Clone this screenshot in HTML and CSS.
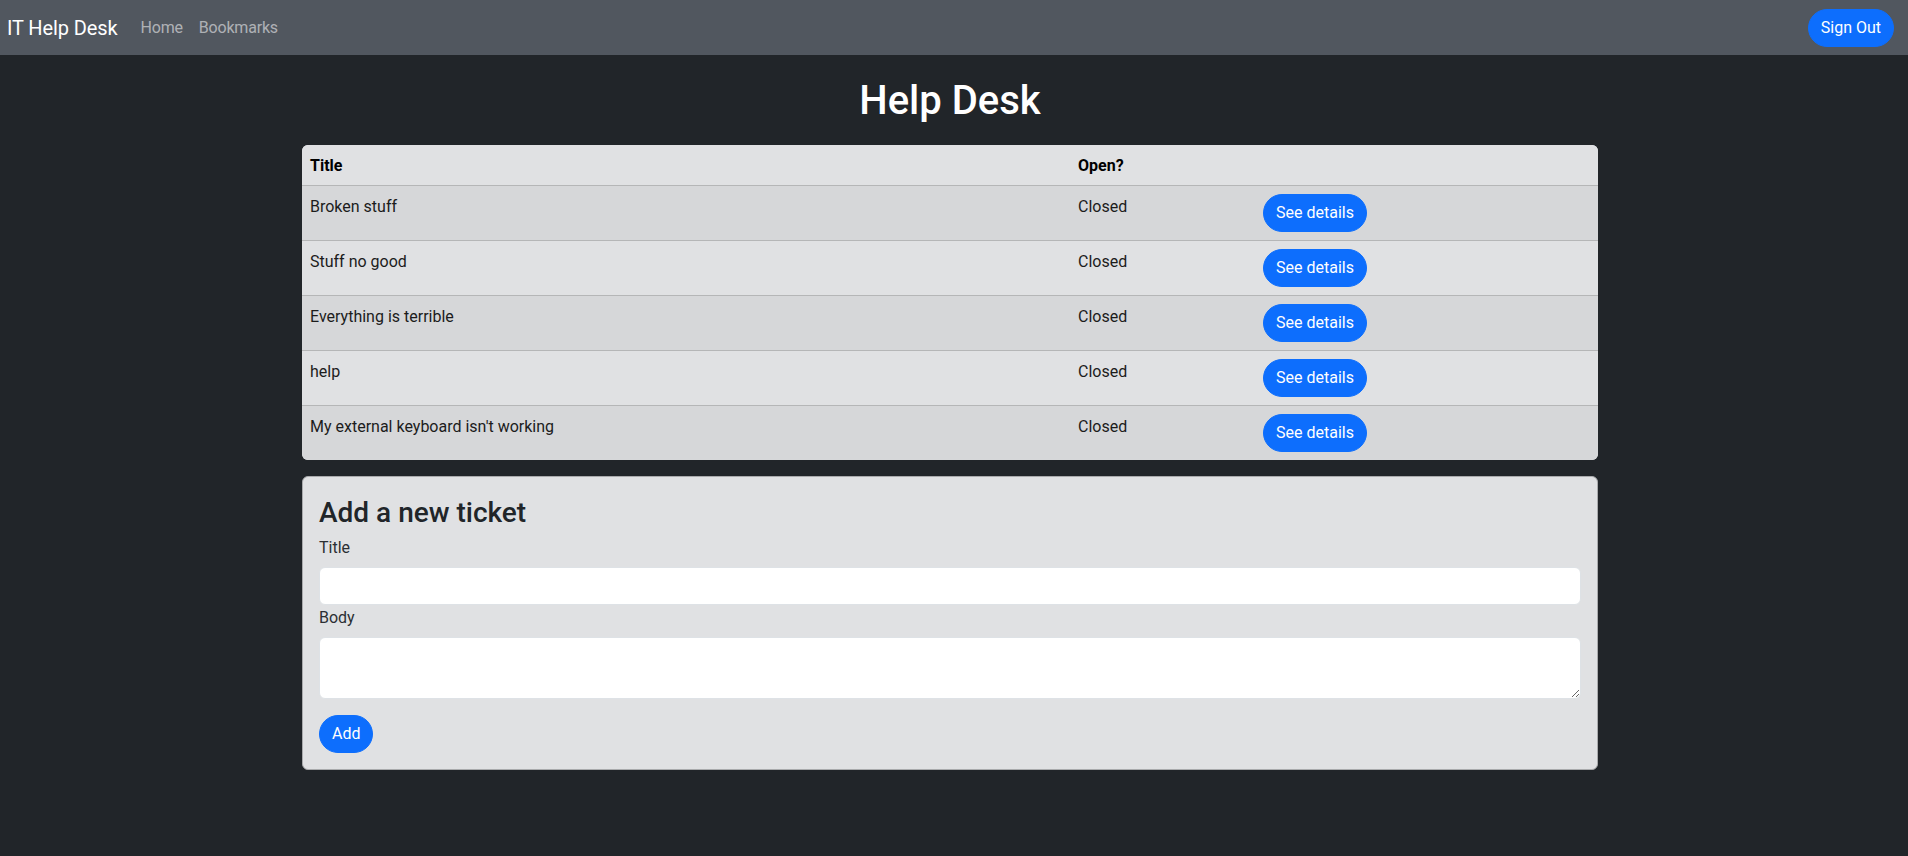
FILE: index.html
```html
<!DOCTYPE html>
<html lang="en">
<head>
<meta charset="utf-8">
<title>IT Help Desk</title>
<link rel="stylesheet" href="styles.css">
</head>
<body>
<nav class="navbar">
  <a class="brand" href="#">IT Help Desk</a>
  <a class="nav-link" href="#">Home</a>
  <a class="nav-link" href="#">Bookmarks</a>
  <button class="btn btn-pill signout">Sign Out</button>
</nav>
<main class="container">
  <h1 class="page-title">Help Desk</h1>
  <div class="table-wrap">
    <table class="tickets">
      <colgroup>
        <col class="col-title">
        <col class="col-open">
        <col class="col-action">
      </colgroup>
      <thead>
        <tr><th>Title</th><th>Open?</th><th></th></tr>
      </thead>
      <tbody>
        <tr class="odd"><td>Broken stuff</td><td>Closed</td><td class="action"><button class="btn btn-pill">See details</button></td></tr>
        <tr><td>Stuff no good</td><td>Closed</td><td class="action"><button class="btn btn-pill">See details</button></td></tr>
        <tr class="odd"><td>Everything is terrible</td><td>Closed</td><td class="action"><button class="btn btn-pill">See details</button></td></tr>
        <tr><td>help</td><td>Closed</td><td class="action"><button class="btn btn-pill">See details</button></td></tr>
        <tr class="odd"><td>My external keyboard isn't working</td><td>Closed</td><td class="action"><button class="btn btn-pill">See details</button></td></tr>
      </tbody>
    </table>
  </div>
  <section class="card">
    <h3 class="card-title">Add a new ticket</h3>
    <form class="ticket-form">
      <label class="form-label" for="title">Title</label>
      <input class="form-control" id="title" type="text">
      <label class="form-label" for="body">Body</label>
      <textarea class="form-control form-textarea" id="body" rows="2"></textarea>
      <button class="btn btn-pill add-btn" type="button">Add</button>
    </form>
  </section>
</main>
</body>
</html>
```
FILE: styles.css
```css
* { box-sizing: border-box; }
html, body { margin: 0; padding: 0; }
body {
  background: #212529;
  color: #212529;
  font-family: Roboto, "Liberation Sans", sans-serif;
  font-size: 16px;
  line-height: 1.5;
}
a { text-decoration: none; }

.navbar {
  display: flex;
  align-items: center;
  height: 55px;
  padding: 0 14px 0 7px;
  background: #51575f;
}
.brand {
  color: #fff;
  font-size: 20px;
  line-height: 30px;
  margin-right: 15px;
  letter-spacing: -0.1px;
}
.nav-link {
  color: rgba(255, 255, 255, 0.55);
  padding: 0 8px;
  line-height: 24px;
  letter-spacing: -0.2px;
}
.signout { margin-left: auto; }

.btn {
  font-family: inherit;
  font-size: 16px;
  line-height: 24px;
  padding: 6px 12px;
  border: 1px solid #0d6efd;
  background: #0d6efd;
  color: #fff;
  cursor: pointer;
}
.btn-pill { border-radius: 50rem; }

.container {
  width: 1296px;
  margin: 0 0 0 302px;
}
.page-title {
  color: #fff;
  text-align: center;
  font-size: 40px;
  font-weight: 500;
  line-height: 48px;
  margin: 22px 0 20px;
}

.table-wrap {
  border-radius: 6px;
  overflow: hidden;
  margin-bottom: 16px;
  background: #e2e3e5;
}
.tickets {
  width: 100%;
  border-collapse: collapse;
  color: #000;
}
.col-title { width: 768px; }
.col-open { width: 185px; }
.tickets th,
.tickets td {
  padding: 9px 8px 7px;
  text-align: left;
  vertical-align: top;
}
.tickets td.action { padding: 8px; }
.tickets th { font-weight: 700; background: #e0e1e3; }
.tickets tr { border-top: 1px solid #b5b6b7; }
.tickets thead tr { border-top: 0; }
.tickets tbody tr { background: #e0e1e3; }
.tickets tbody tr.odd { background: #d6d7d9; }
.tickets td { color: #1c1c1c; }

.card {
  background: #e0e1e3;
  border: 1px solid #a9aaac;
  border-radius: 6px;
  padding: 19px 16px 16px;
}
.card-title {
  font-size: 28px;
  font-weight: 500;
  line-height: 1.2;
  margin: 0 0 5px;
}
.ticket-form { display: flex; flex-direction: column; align-items: flex-start; }
.form-label { display: block; padding-top: 1px; margin-bottom: 7px; color: #2b2f33; }
.form-control {
  display: block;
  width: 100%;
  height: 38px;
  padding: 6px 12px;
  font-family: inherit;
  font-size: 16px;
  line-height: 24px;
  background: #fff;
  border: 1px solid #dee2e6;
  border-radius: 6px;
}
.form-textarea { height: 62px; resize: vertical; }
.add-btn { margin-top: 16px; }
```
